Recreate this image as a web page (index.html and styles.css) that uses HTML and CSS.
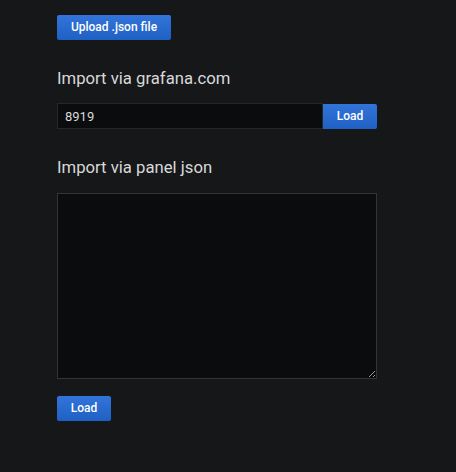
FILE: index.html
```html
<!DOCTYPE html>
<html>
<head>
<meta charset="utf-8">
<link rel="stylesheet" href="styles.css">
</head>
<body>
<div class="page">
  <button class="btn">Upload .json file</button>
  <h2 class="heading first">Import via grafana.com</h2>
  <div class="input-row">
    <input class="input" type="text" value="8919">
    <button class="btn btn-attached">Load</button>
  </div>
  <h2 class="heading second">Import via panel json</h2>
  <textarea class="textarea"></textarea>
  <button class="btn btn-load">Load</button>
</div>
</body>
</html>
```
FILE: styles.css
```css
html, body {
  margin: 0;
  padding: 0;
  background: #161719;
  height: 100%;
}
body {
  font-family: Roboto, "Liberation Sans", sans-serif;
  color: #d8d9da;
}
.page {
  display: flex;
  flex-direction: column;
  align-items: flex-start;
  padding: 15px 0 0 57px;
}
.btn {
  height: 25px;
  padding: 0 13px;
  border: 0;
  border-radius: 2px;
  background: linear-gradient(to bottom, #3274d9, #1f60c4);
  color: #fff;
  font-family: Roboto, "Liberation Sans", sans-serif;
  font-size: 12px;
  font-weight: 500;
  line-height: 25px;
  cursor: pointer;
  width: 114px;
}
.heading {
  margin: 0;
  font-size: 16.7px;
  font-weight: 400;
  line-height: 22px;
  color: #d8d9da;
}
.heading.first {
  margin-top: 28px;
}
.input-row {
  display: flex;
  margin-top: 13px;
}
.input {
  box-sizing: border-box;
  width: 266px;
  height: 26px;
  margin: 0;
  padding: 0 7px;
  background: #0b0c0e;
  border: 1px solid #262628;
  border-radius: 0;
  color: #d8d9da;
  font-family: Roboto, "Liberation Sans", sans-serif;
  font-size: 13px;
  outline: none;
}
.btn-attached {
  width: 54px;
  height: 25px;
  margin-top: 1px;
  border-radius: 0 2px 2px 0;
  padding: 0;
}
.heading.second {
  margin-top: 28px;
}
.textarea {
  box-sizing: border-box;
  width: 320px;
  height: 186px;
  margin: 14px 0 0 0;
  background: #0b0c0e;
  border: 1px solid #343436;
  border-radius: 0;
  resize: both;
  outline: none;
}
.btn-load {
  width: 54px;
  padding: 0;
  margin-top: 17px;
}
```
